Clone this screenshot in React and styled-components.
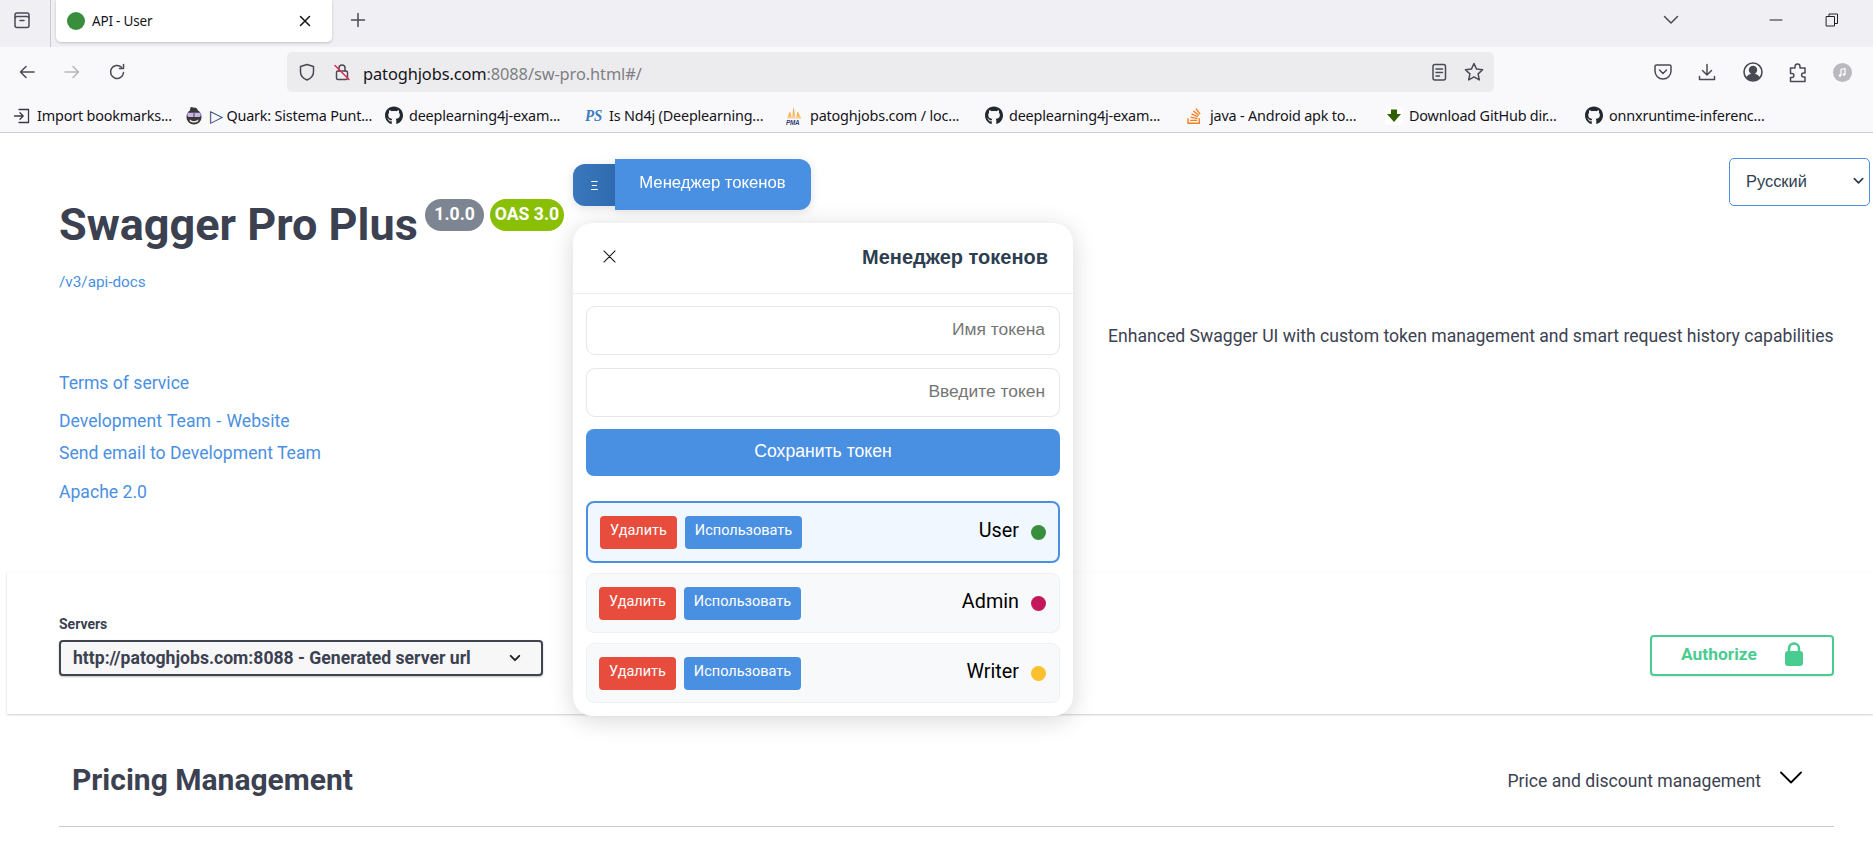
import React from "react";
import styled, { createGlobalStyle } from "styled-components";
import { FaGithub, FaStackOverflow } from "react-icons/fa";

const Global = createGlobalStyle`
  html, body { margin: 0; padding: 0; background: #fff; overflow: hidden; height: 843px; }
  * { box-sizing: border-box; }
  #root { position: relative; width: 1873px; height: 843px; overflow: hidden; font-family: Roboto, sans-serif; }
`;

const chromeFont = `"Noto Sans", "Open Sans", sans-serif`;

const TabStrip = styled.div`
  height: 47px; background: #f0f0f4; display: flex; align-items: flex-start; position: relative;
`;
const Slot = styled.span`
  width: ${p => p.$w}px; height: ${p => p.$h || 40}px; flex: none; margin-left: ${p => p.$ml || 0}px;
  display: flex; align-items: center; justify-content: center; color: ${p => p.$c || "#4a4a55"};
`;
const TabSep = styled.div`width: 1px; height: 47px; background: #c9c9cf; flex: none; margin-left: 6px;`;
const Tab = styled.div`
  width: 276px; height: 42px; margin-left: 5px; background: #fff; border-radius: 0 0 5px 5px;
  box-shadow: 0 1px 3px rgba(0,0,0,.2); display: flex; align-items: center; padding-left: 11px; flex: none;
`;
const TabDot = styled.span`width: 18px; height: 18px; border-radius: 50%; background: #388e3c; flex: none;`;
const TabTitle = styled.span`
  font: 13.5px ${chromeFont}; color: #15141a; margin-left: 7px; width: 205px; letter-spacing: -.2px;
`;
const Toolbar = styled.div`
  height: 45px; padding-top: 5px; background: #f9f9fb; display: flex; align-items: stretch;
`;
const UrlBar = styled.div`
  width: 1207px; margin-left: 160px; flex: none; background: #ececee; border-radius: 5px;
  display: flex; align-items: center;
`;
const UrlText = styled.div`
  font: 16.4px ${chromeFont}; color: #15141a; margin-left: 11px; flex: 1; letter-spacing: -.1px; padding-top: 2px;
`;
const UrlDim = styled.span`color: #7f7f84;`;
const Bookmarks = styled.div`
  height: 41px; background: #f9f9fb; border-bottom: 1px solid #ccc; display: flex; align-items: center; padding: 7px 0 0 13px;
`;
const Bookmark = styled.div`
  width: ${p => p.$w}px; flex: none; display: flex; align-items: center; gap: ${p => p.$gap || 6}px; white-space: nowrap;
  font: 14.4px ${chromeFont}; color: #15141a; letter-spacing: -.18px;
`;
const BmIcon = styled.span`width: 18px; height: 20px; flex: none; display: flex; align-items: center; justify-content: center; color: #24292f;`;
const BmTriangle = styled.span`font-size: 17px; line-height: 14px; color: #25406e; vertical-align: -1px;`;

const Page = styled.main`background: #fff;`;
const Info = styled.section`height: 439px; display: flex; padding-left: 59px;`;
const InfoLeft = styled.div`width: 1049px; flex: none;`;
const TitleRow = styled.div`display: flex; align-items: flex-start; margin-top: 66px;`;
const Title = styled.h1`
  margin: 0; font: 700 45px/52px Roboto, sans-serif; color: #3b4151; white-space: nowrap;
`;
const Badge = styled.span`
  height: 32px; padding: 0 ${p => p.$pad}px; border-radius: 16px; background: ${p => p.$bg}; color: #fff;
  font: 700 17.6px/31px Roboto, sans-serif; margin-left: ${p => p.$ml}px; white-space: nowrap; flex: none;
`;
const BaseUrl = styled.a`
  display: block; margin-top: 21px; font: 15.3px/20px Roboto, sans-serif; color: #4a90e2;
`;
const InfoLink = styled.a`
  display: block; margin-top: ${p => p.$mt}px; font: 17.6px/20px Roboto, sans-serif; color: #4a90e2; white-space: nowrap;
  word-spacing: ${p => p.$ws || 0}px;
`;
const Description = styled.p`
  margin: 193px 0 0; font: 17.6px/20px Roboto, sans-serif; color: #3b4151; white-space: nowrap;
`;
const Schemes = styled.section`
  margin-left: 7px; height: 142px; background: #fff; box-shadow: 0 1px 2px rgba(0,0,0,.2);
  display: flex; justify-content: space-between; padding: 44px 39px 0 52px;
`;
const ServersLabel = styled.div`font: 700 14px/16px Roboto, sans-serif; color: #3b4151; margin-bottom: 8px;`;
const ServerSelect = styled.div`
  width: 484px; height: 36px; border: 2px solid #41444e; border-radius: 4px; background: #f7f7f7;
  box-shadow: 0 1px 2px rgba(0,0,0,.25); display: flex; align-items: center; justify-content: space-between;
  padding: 0 20px 0 12px; font: 700 17.6px/20px Roboto, sans-serif; color: #3b4151; white-space: nowrap;
`;
const AuthButton = styled.button`
  width: 184px; height: 41px; margin-top: 19px; border: 2px solid #49cc90; border-radius: 4px; background: transparent;
  box-shadow: 0 1px 2px rgba(0,0,0,.1); display: flex; align-items: center; padding: 0 0 3px 29px; gap: 28px;
  font: 700 17.4px/20px Roboto, sans-serif; color: #49cc90;
`;
const Section = styled.section`
  margin: 0 39px 0 59px; height: 113px; border-bottom: 1px solid #c8c9cd; display: flex; justify-content: space-between;
  align-items: flex-start; padding: 46px 32px 0 13px;
`;
const SectionTitle = styled.h3`margin: 0; font: 700 30px/40px Roboto, sans-serif; color: #3b4151;`;
const SectionRight = styled.div`display: flex; align-items: flex-start; gap: 19px; font: 17.6px/20px Roboto, sans-serif; color: #3b4151; padding-top: 11px;`;

const LangSelect = styled.div`
  position: absolute; left: 1729px; top: 158px; width: 141px; height: 48px; border: 1px solid #4a90e2; border-radius: 5px;
  background: #fff; display: flex; align-items: center; justify-content: space-between; padding: 0 4px 3px 16px;
  font: 16.4px/20px "Liberation Sans", sans-serif; color: #2c3e50;
`;
const ToggleWrap = styled.div`
  position: absolute; left: 573px; top: 159px; display: flex; align-items: center;
  filter: drop-shadow(0 2px 5px rgba(0,0,0,.12));
`;
const ToggleHandle = styled.button`
  width: 42px; height: 42px; border: 0; border-radius: 12px 0 0 12px; background: linear-gradient(90deg,#3a77bd,#2f6bae);
  color: #fff; font: 12px "Liberation Sans", sans-serif; padding: 2px 0 0 1px; text-align: center;
`;
const ToggleMain = styled.button`
  width: 196px; height: 51px; border: 0; border-radius: 0 12px 12px 0; background: #4a90e2; color: #fff;
  font: 16.7px "Liberation Sans", sans-serif; padding: 0 1px 3px 0;
`;
const Panel = styled.aside`
  position: absolute; left: 573px; top: 223px; width: 500px; height: 493px; background: #fff; border-radius: 20px;
  box-shadow: 0 4px 24px rgba(0,0,0,.16);
`;
const PanelHead = styled.header`
  height: 71px; border-bottom: 1px solid #eee; display: flex; align-items: center; justify-content: space-between; padding: 0 25px 4px 30px;
`;
const PanelTitle = styled.h3`margin: 0; font: 700 20px/24px "Liberation Sans", sans-serif; color: #2c3e50; padding-top: 2px;`;
const PanelBody = styled.div`padding: 12px 13px 0;`;
const Field = styled.input`
  display: block; width: 100%; height: 49px; border: 1.5px solid #e6e6e6; border-radius: 9px; background: #fff; margin-bottom: 13px;
  padding: 0 14px 3px; text-align: right; font: 17.4px "Liberation Sans", sans-serif;
  &::placeholder { color: #757575; opacity: 1; }
`;
const SaveButton = styled.button`
  display: block; width: 100%; height: 47px; margin-top: -1px; border: 0; border-radius: 8px; background: #4a90e2; color: #fff;
  font: 17.6px "Liberation Sans", sans-serif; padding: 0 0 2px;
`;
const TokenList = styled.div`margin-top: 25px; display: flex; flex-direction: column; gap: 10px;`;
const TokenRow = styled.div`
  height: ${p => p.$active ? 62 : 60}px; border: ${p => p.$active ? "2px solid #4a90e2" : "1px solid #eef0f2"}; border-radius: 8px;
  background: ${p => p.$active ? "#f0f7ff" : "#f8f9fa"}; display: flex; align-items: center; padding: 0 ${p => p.$active ? 12 : 13}px 0 12px; gap: 8px;
`;
const RowButton = styled.button`
  height: 33px; width: ${p => p.$w}px; flex: none; border: 0; border-radius: 4px; background: ${p => p.$bg}; color: #fff;
  font: 14.5px/1 Roboto, sans-serif; padding: 0 0 2px;
`;
const TokenName = styled.span`margin-left: auto; font: 19.8px/24px Roboto, sans-serif; color: #000; padding-bottom: 3px;`;
const TokenDot = styled.span`width: 15px; height: 15px; border-radius: 50%; background: ${p => p.$c}; margin-left: 4px; flex: none;`;

const S = ({ children, w = 20, h = 20, vb = "0 0 20 20", sw = 1.5, color = "currentColor", fill = "none" }) => (
  <svg width={w} height={h} viewBox={vb} fill={fill} stroke={color} strokeWidth={sw} strokeLinecap="round" strokeLinejoin="round">{children}</svg>
);

const tokens = [
  { name: "User", color: "#388e3c", active: true },
  { name: "Admin", color: "#c2185b" },
  { name: "Writer", color: "#fbc02d" },
];

const Github = () => <FaGithub size={19} color="#24292f" />;

export default function App() {
  return (
    <>
      <Global />
      <TabStrip>
        <Slot $w={44} $ml={0}>
          <S><path d="M3 7.5V5a2 2 0 0 1 2-2h10a2 2 0 0 1 2 2v2.5" /><rect x="3" y="6.5" width="14" height="11" rx="2" /><path d="M8 10.5h4" /></S>
        </Slot>
        <TabSep />
        <Tab>
          <TabDot />
          <TabTitle>API - User</TabTitle>
          <S w={16} h={16} vb="0 0 16 16" color="#15141a"><path d="M3.5 3.5l9 9M12.5 3.5l-9 9" /></S>
        </Tab>
        <Slot $w={18} $ml={17}>
          <S w={16} h={16} vb="0 0 16 16"><path d="M8 1.5v13M1.5 8h13" /></S>
        </Slot>
        <Slot $w={20} $ml={1294}>
          <S w={18} h={18} vb="0 0 18 18"><path d="M2.5 5.5L9 12l6.5-6.5" /></S>
        </Slot>
        <Slot $w={20} $ml={85} $c="#222">
          <S w={14} h={14} vb="0 0 14 14" sw={1}><path d="M1 7h12" /></S>
        </Slot>
        <Slot $w={20} $ml={36} $c="#222">
          <S w={14} h={14} vb="0 0 14 14" sw={1}><rect x="1.5" y="3.5" width="8" height="9.5" /><path d="M4 3.5V1h8.5v9.5H9.5" /></S>
        </Slot>
      </TabStrip>
      <Toolbar>
        <Slot $w={20} $ml={17}>
          <S><path d="M17 10H3.5M9 4.5L3.5 10 9 15.5" /></S>
        </Slot>
        <Slot $w={20} $ml={25} $c="#b6b6bb">
          <S><path d="M3 10h13.5M11 4.5l5.5 5.5-5.5 5.5" /></S>
        </Slot>
        <Slot $w={20} $ml={25}>
          <S><path d="M16.5 10.5A6.5 6.5 0 1 1 14.5 5.3" /><path d="M16.5 2.5v4h-4" /></S>
        </Slot>
        <UrlBar>
          <Slot $w={20} $ml={10}>
            <S><path d="M10 2.5l6.5 2V10c0 4-3 6.5-6.5 8-3.500-1.500-6.500-4-6.500-8V4.500z" /></S>
          </Slot>
          <Slot $w={20} $ml={15}>
            <S>
              <rect x="4.5" y="9" width="11" height="8.5" rx="1.5" />
              <path d="M7 9V6a3 3 0 0 1 6 0v3" />
              <path d="M3 3.5l14 14" stroke="#e22850" />
            </S>
          </Slot>
          <UrlText>patoghjobs.com<UrlDim>:8088/sw-pro.html#/</UrlDim></UrlText>
          <Slot $w={20}>
            <S><rect x="4" y="2.5" width="12.5" height="15.5" rx="2" /><path d="M7 7h6.5M7 10.5h6.5M7 14h3.5" /></S>
          </Slot>
          <Slot $w={22} $ml={14}>
            <S w={22} h={22} vb="0 0 22 22"><path d="M11 2.5l2.600 5.600 6 .7-4.500 4.100 1.200 6-5.300-3-5.300 3 1.200-6L2.400 8.800l6-.7z" /></S>
          </Slot>
          <Slot $w={9} />
        </UrlBar>
        <Slot $w={20} $ml={159}>
          <S><path d="M3.5 3h13A1.500 1.500 0 0 1 18 4.500V9a8 8 0 0 1-16 0V4.500A1.500 1.500 0 0 1 3.500 3z" /><path d="M6.5 8l3.500 3.500L13.500 8" /></S>
        </Slot>
        <Slot $w={20} $ml={24}>
          <S><path d="M10 2.5V13M5.500 8.500L10 13l4.500-4.500M2.500 14.500v3h15v-3" /></S>
        </Slot>
        <Slot $w={22} $ml={25}>
          <S w={22} h={22} vb="0 0 22 22" sw={1.6}><circle cx="11" cy="11" r="9" /><circle cx="11" cy="9" r="3.400" fill="#4a4a55" /><path d="M5 16.500c1.500-2.500 3.500-3 6-3s4.500.5 6 3c-1.500 1.500-3.500 2.500-6 2.500s-4.500-1-6-2.500z" fill="#4a4a55" /></S>
        </Slot>
        <Slot $w={20} $ml={24}>
          <S w={20} h={22} vb="0 0 20 22"><path d="M2.500 7H7V5.500C7 2 12 2 12 5.500V7h5v5h-1.500c-2.500 0 -2.500 4 0 4H17v4.500H2.500v-4H4c2.500 0 2.500-4 0-4H2.500z" /></S>
        </Slot>
        <Slot $w={20} $ml={24}>
          <svg width="19" height="19" viewBox="0 0 19 19"><circle cx="9.5" cy="9.5" r="9.5" fill="#b9b9be" /><path d="M8 12.500V6.500l4-1v6" stroke="#fff" strokeWidth="1.200" fill="none" /><circle cx="7" cy="12.500" r="1.300" fill="#fff" /><circle cx="11" cy="11.500" r="1.300" fill="#fff" /></svg>
        </Slot>
      </Toolbar>
      <Bookmarks>
        <Bookmark $w={172} $gap={6}>
          <BmIcon>
            <S w={18} h={18} vb="0 0 18 18" sw={1.3} color="#3a3a44"><path d="M6 2.500h9.500v13H6M1.500 9h8.500M7 5.800L10.200 9 7 12.200" /></S>
          </BmIcon>
          Import bookmarks...
        </Bookmark>
        <Bookmark $w={200} $gap={7}>
          <BmIcon>
            <svg width="19" height="21" viewBox="0 0 19 21">
              <path d="M6 1.500l6 1 2 3H5z" fill="#3a3636" />
              <circle cx="9.500" cy="12" r="8" fill="#3a3636" />
              <rect x="2.500" y="7.500" width="14" height="4.500" rx="1.500" fill="#c8b4ec" />
              <path d="M9.500 8v4" stroke="#3a3636" strokeWidth="1" />
              <path d="M5 14.500c2 2.500 7 2.500 9 0v2c-2 2-7 2-9 0z" fill="#e8e4e0" />
            </svg>
          </BmIcon>
          <span><BmTriangle>▷</BmTriangle> Quark: Sistema Punt...</span>
        </Bookmark>
        <Bookmark $w={200} $gap={6}>
          <BmIcon><Github /></BmIcon>
          deeplearning4j-exam...
        </Bookmark>
        <Bookmark $w={200} $gap={6}>
          <BmIcon>
            <svg width="21" height="20" viewBox="0 0 21 20"><text x="0" y="16" fontFamily="Liberation Serif" fontStyle="italic" fontWeight="700" fontSize="19" textLength="20" lengthAdjust="spacingAndGlyphs" fill="#3d7ebf">PS</text></svg>
          </BmIcon>
          Is Nd4j (Deeplearning...
        </Bookmark>
        <Bookmark $w={200} $gap={7}>
          <BmIcon>
            <svg width="20" height="20" viewBox="0 0 20 20">
              <defs><linearGradient id="pmaFlame" x1="0" y1="0" x2="0" y2="1"><stop offset="0" stopColor="#f29111" /><stop offset="1" stopColor="#fbd9a6" /></linearGradient></defs>
              <path d="M9.500 0l2.500 13H7.500z" fill="url(#pmaFlame)" />
              <path d="M5.500 5L8 13H2z" fill="url(#pmaFlame)" />
              <path d="M14 5l4.500 8H12z" fill="url(#pmaFlame)" />
              <text x="1" y="19.500" fontFamily="Liberation Sans" fontStyle="italic" fontWeight="700" fontSize="7" fill="#2f3f80">PMA</text>
            </svg>
          </BmIcon>
          patoghjobs.com / loc...
        </Bookmark>
        <Bookmark $w={200} $gap={6}>
          <BmIcon><Github /></BmIcon>
          deeplearning4j-exam...
        </Bookmark>
        <Bookmark $w={200} $gap={7}>
          <BmIcon><FaStackOverflow size={18} color="#f48024" /></BmIcon>
          java - Android apk to...
        </Bookmark>
        <Bookmark $w={200} $gap={6}>
          <BmIcon>
            <svg width="18" height="18" viewBox="0 0 18 18"><rect width="18" height="18" rx="3" fill="#fff" /><path d="M6 2.500h6V7h4l-7 8-7-8h4z" fill="#2f5f00" /></svg>
          </BmIcon>
          Download GitHub dir...
        </Bookmark>
        <Bookmark $w={180} $gap={6}>
          <BmIcon><Github /></BmIcon>
          onnxruntime-inferenc...
        </Bookmark>
      </Bookmarks>
      <Page>
        <Info>
          <InfoLeft>
            <TitleRow>
              <Title>Swagger Pro Plus</Title>
              <Badge $bg="#7d8492" $pad={9.5} $ml={7}>1.0.0</Badge>
              <Badge $bg="#89bf04" $pad={4.5} $ml={6}>OAS 3.0</Badge>
            </TitleRow>
            <BaseUrl>/v3/api-docs</BaseUrl>
            <InfoLink $mt={81}>Terms of service</InfoLink>
            <InfoLink $mt={18} $ws={1}>Development Team - Website</InfoLink>
            <InfoLink $mt={12}>Send email to Development Team</InfoLink>
            <InfoLink $mt={19}>Apache 2.0</InfoLink>
          </InfoLeft>
          <Description>Enhanced Swagger UI with custom token management and smart request history capabilities</Description>
        </Info>
        <Schemes>
          <div>
            <ServersLabel>Servers</ServersLabel>
            <ServerSelect>
              http://patoghjobs.com:8088 - Generated server url
              <S w={12} h={12} vb="0 0 14 14" sw={2.2} color="#222"><path d="M2 4.500l5 5 5-5" /></S>
            </ServerSelect>
          </div>
          <AuthButton>
            Authorize
            <svg width="18" height="24" viewBox="0 0 18 24"><path d="M4 10V6.500a5 5 0 0 1 10 0V10" fill="none" stroke="#49cc90" strokeWidth="2.500" /><rect x="0" y="9" width="18" height="15" rx="3" fill="#49cc90" /></svg>
          </AuthButton>
        </Schemes>
        <Section>
          <SectionTitle>Pricing Management</SectionTitle>
          <SectionRight>
            Price and discount management
            <S w={22} h={14} vb="0 0 22 14" sw={1.8} color="#000"><path d="M1 1.500l10 10 10-10" /></S>
          </SectionRight>
        </Section>
      </Page>

      <LangSelect>
        Русский
        <S w={13} h={13} vb="0 0 14 14" sw={1.8} color="#2c3e50"><path d="M2.500 5l4.500 4.500L11.500 5" /></S>
      </LangSelect>

      <ToggleWrap>
        <ToggleHandle>Ξ</ToggleHandle>
        <ToggleMain>Менеджер токенов</ToggleMain>
      </ToggleWrap>

      <Panel>
        <PanelHead>
          <S w={13} h={13} vb="0 0 14 14" sw={1.1} color="#111"><path d="M1 1l12 12M13 1L1 13" /></S>
          <PanelTitle>Менеджер токенов</PanelTitle>
        </PanelHead>
        <PanelBody>
          <Field placeholder="Имя токена" readOnly />
          <Field placeholder="Введите токен" readOnly />
          <SaveButton>Сохранить токен</SaveButton>
          <TokenList>
            {tokens.map(t => (
              <TokenRow key={t.name} $active={t.active}>
                <RowButton $w={77} $bg="#e74c3c">Удалить</RowButton>
                <RowButton $w={117} $bg="#4a90e2">Использовать</RowButton>
                <TokenName>{t.name}</TokenName>
                <TokenDot $c={t.color} />
              </TokenRow>
            ))}
          </TokenList>
        </PanelBody>
      </Panel>
    </>
  );
}
